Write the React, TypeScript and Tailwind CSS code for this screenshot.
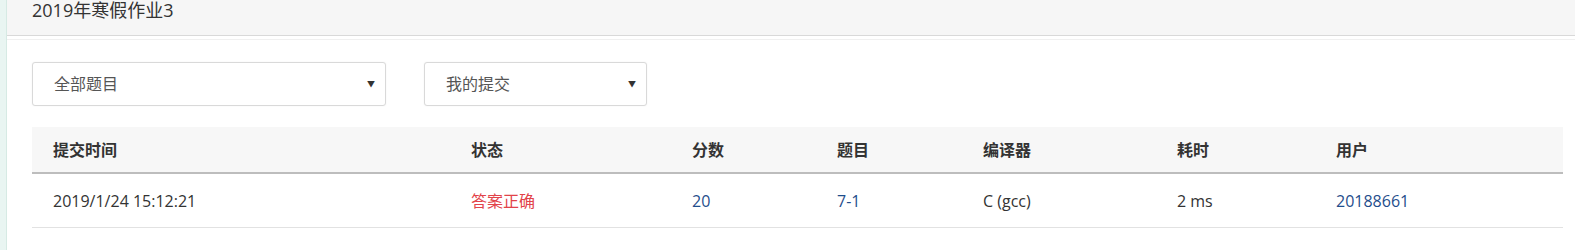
import React from 'react';

const font = { fontFamily: '"Open Sans", "Noto Sans CJK SC", sans-serif' };

const columns = [
  { label: '提交时间', w: 'w-[418px]' },
  { label: '状态', w: 'w-[221px]' },
  { label: '分数', w: 'w-[145px]' },
  { label: '题目', w: 'w-[146px]' },
  { label: '编译器', w: 'w-[194px]' },
  { label: '耗时', w: 'w-[159px]' },
  { label: '用户', w: 'w-[248px]' },
];

const Select: React.FC<{ label: string; w: string }> = ({ label, w }) => (
  <div className={`${w} h-[44px] shrink-0 flex items-center justify-between pl-[21px] pr-[10px] border border-[#d9d9d9] rounded-[3px] bg-white shadow-[0_0_2px_rgba(0,0,0,0.06)] text-[16px] text-[#555]`}>
    <span>{label}</span>
    <span className="text-[8px] text-[#333]">▼</span>
  </div>
);

export default function App() {
  return (
    <div className="w-full h-[250px] flex bg-white overflow-hidden" style={font}>
      {/* left strip */}
      <div className="w-[7px] shrink-0 bg-[#e9f5f2] border-r border-[#d6eae4]" />

      <div className="flex-1 flex flex-col min-w-0">
        {/* title bar */}
        <div className="h-[36px] flex items-end pl-[25px] pb-[14px] bg-[#f6f6f6] border-b border-[#d9d9d9]">
          <span className="text-[18px] leading-[21px] text-[#333]">2019年寒假作业3</span>
        </div>
        <div className="h-[4px] border-b border-[#f0f0f0]" />

        <div className="pl-[25px] pr-[12px]">
          {/* filters */}
          <div className="flex gap-[38px] mt-[22px]">
            <Select label="全部题目" w="w-[354px]" />
            <Select label="我的提交" w="w-[223px]" />
          </div>

          {/* submissions table */}
          <div className="mt-[21px] text-[16px]">
            <div className="flex h-[47px] items-center bg-[#f7f7f7] border-b-2 border-[#bdbdbd] font-bold text-[#333]">
              {columns.map((c) => (
                <div key={c.label} className={`${c.w} shrink-0 pl-[21px]`}>{c.label}</div>
              ))}
            </div>
            <div className="flex h-[54px] items-center border-b border-[#e2e2e2] text-[#333]">
              <div className="w-[418px] shrink-0 pl-[21px]">2019/1/24 15:12:21</div>
              <div className="w-[221px] shrink-0 pl-[21px] text-[#e2434a]">答案正确</div>
              <div className="w-[145px] shrink-0 pl-[21px] text-[#1f4e8c]">20</div>
              <div className="w-[146px] shrink-0 pl-[21px] text-[#1f4e8c]">7-1</div>
              <div className="w-[194px] shrink-0 pl-[21px]">C (gcc)</div>
              <div className="w-[159px] shrink-0 pl-[21px]">2 ms</div>
              <div className="w-[248px] shrink-0 pl-[21px] text-[#1f4e8c]">20188661</div>
            </div>
          </div>
        </div>
      </div>
    </div>
  );
}
